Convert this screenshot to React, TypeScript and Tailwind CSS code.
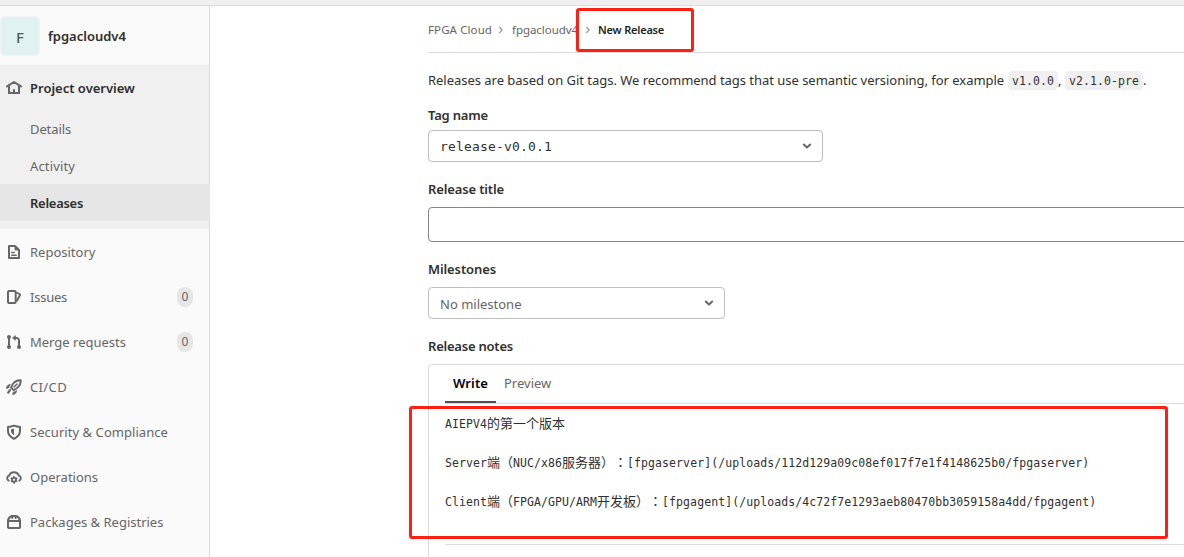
import type { ReactNode } from "react";

const sans = "font-['Noto_Sans','Noto_Sans_CJK_SC',sans-serif]";
const mono = "font-['DejaVu_Sans_Mono','Noto_Sans_CJK_SC',monospace]";

function Icon({ children }: { children: ReactNode }) {
  return (
    <svg
      viewBox="0 0 16 16"
      className="size-4 shrink-0"
      fill="none"
      stroke="#666"
      strokeWidth="2"
      strokeLinejoin="round"
    >
      {children}
    </svg>
  );
}

const HomeIcon = () => (
  <Icon>
    <path d="M1 6.400 8 2l7 4.400" strokeLinecap="round" />
    <path d="M3 6v7h10V6" strokeLinejoin="miter" />
    <path d="M8 9.200V13" />
  </Icon>
);
const DocIcon = () => (
  <Icon>
    <path d="M3 2h6l4 4v8H3z" />
    <path d="M9 2v4h4z" fill="#666" strokeWidth=".8" />
    <path d="M5.200 8.600h3.600M5.200 11.200h5.600" strokeWidth="1.500" />
  </Icon>
);
const IssuesIcon = () => (
  <Icon>
    <path d="M2.800 2h5.900a1 1 0 0 1 1 1v10a1 1 0 0 1-1 1H2.800a1 1 0 0 1-.8-1V3a1 1 0 0 1 .8-1z" />
    <path d="m10.500 3.500 3.100 1.500a.8.800 0 0 1 .4 1l-3.200 6.200" strokeWidth="1.900" />
  </Icon>
);
const MergeIcon = () => (
  <Icon>
    <path d="M3 3v10M13 13V6.500A2.600 2.600 0 0 0 10.400 3.900H9" />
    <path d="M9.800 1v5.800L6 3.900z" fill="#666" stroke="none" />
    <circle cx="3" cy="3" r="2" fill="#666" stroke="none" />
    <circle cx="3" cy="13" r="2" fill="#666" stroke="none" />
    <circle cx="13" cy="13" r="2" fill="#666" stroke="none" />
  </Icon>
);
const RocketIcon = () => (
  <Icon>
    <path d="M14.700 1.300c-3.600-.2-6 1.100-8 4L5 8.700l2.500 2.500 3.200-1.900c2.900-2 4.200-4.400 4-8z" strokeWidth="1.900" />
    <path d="M11 5 8 8" strokeWidth="1.500" strokeLinecap="round" />
    <path d="M4.400 5.200C2 5.500.700 6.800.300 9.400l2.300-.4zM10.800 11.600c-.3 2.400-1.600 3.700-4.200 4.100l.4-2.300z" fill="#666" strokeWidth=".6" />
    <path d="M4 11.200 2.200 13.600" strokeWidth="2.200" strokeLinecap="round" />
  </Icon>
);
const ShieldIcon = () => (
  <Icon>
    <path d="M8 1.600c2 .8 4 1.200 6 1.300v4.100c0 3.500-2.500 6-6 7.900-3.500-1.900-6-4.400-6-7.900V2.900c2-.1 4-.5 6-1.300z" strokeWidth="2" />
    <path d="M8 4.600v6.600C6 9.900 5 8.600 5 6.900V5.200z" fill="#666" stroke="none" />
  </Icon>
);
const CloudGearIcon = () => (
  <Icon>
    <path d="M2.600 11.600A2.700 2.700 0 0 1 3.200 6.600 5 4.600 0 0 1 12.800 6.600a2.700 2.700 0 0 1 .6 5" strokeWidth="1.900" strokeLinecap="round" />
    <circle cx="8" cy="10.800" r="2" strokeWidth="1.800" />
    <path d="M8 7v1.600M8 13v1.700M4.800 9l1.300.800M9.900 11.900l1.300.700M4.800 12.600l1.300-.7M9.900 9.800l1.300-.8" strokeWidth="1.600" />
  </Icon>
);
const PackageIcon = () => (
  <Icon>
    <path d="M2 7h12v6.200a.8.800 0 0 1-.8.800H2.800a.8.800 0 0 1-.8-.8z" />
    <path d="M2 7c.2-2.200 1.700-4.200 3.700-4.900h4.600c2 .7 3.500 2.700 3.700 4.900" strokeWidth="2.100" />
    <path d="M6.300 2v3M9.700 2v3" strokeWidth="1.600" />
  </Icon>
);

function NavItem({ icon, label, tracking = "", count }: { icon: ReactNode; label: string; tracking?: string; count?: number }) {
  return (
    <a className="flex h-[45px] items-center pl-1.5 pr-4">
      {icon}
      <span className={`ml-2 flex-1 ${tracking}`}>{label}</span>
      {count !== undefined && (
        <span className="flex h-5 w-4 items-center justify-center rounded-full bg-[#e6e6e6] text-[12px]">{count}</span>
      )}
    </a>
  );
}

function Sidebar() {
  return (
    <aside className="h-full w-[210px] shrink-0 border-r border-[#dbdbdb] bg-[#fafafa] text-[13px] text-[#666]">
      <div className="flex h-[59px] items-center pl-px pt-px">
        <div className="mb-px flex h-[38px] w-[38px] items-center justify-center rounded-sm bg-[#e0f2f1] pt-0.5 text-[15px] font-medium text-[#555] ring-1 ring-[#f0f4f4]">
          F
        </div>
        <span className="ml-[9px] font-semibold text-[#2e2e2e]">fpgacloudv4</span>
      </div>
      <div className="bg-[#f0f0f0] pb-2">
        <a className="flex h-[45px] items-center pl-1.5 font-semibold text-[#2e2e2e]">
          <HomeIcon />
          <span className="ml-2">Project overview</span>
        </a>
        <a className="flex h-[37px] items-center pl-[30px] tracking-[-0.1px]">Details</a>
        <a className="flex h-[37px] items-center pl-[30px] tracking-[0.14px]">Activity</a>
        <a className="-mr-px flex h-[37px] items-center bg-[#e6e6e6] pl-[30px] font-semibold tracking-[-0.28px] text-[#2e2e2e]">
          Releases
        </a>
      </div>
      <NavItem icon={<DocIcon />} label="Repository" />
      <NavItem icon={<IssuesIcon />} label="Issues" tracking="tracking-[-0.24px]" count={0} />
      <NavItem icon={<MergeIcon />} label="Merge requests" count={0} />
      <NavItem icon={<RocketIcon />} label="CI/CD" tracking="tracking-[0.37px]" />
      <NavItem icon={<ShieldIcon />} label="Security & Compliance" tracking="tracking-[0.05px]" />
      <NavItem icon={<CloudGearIcon />} label="Operations" />
      <NavItem icon={<PackageIcon />} label="Packages & Registries" />
    </aside>
  );
}

const Chevron = () => (
  <svg viewBox="0 0 10 8" className="h-2 w-2.5" fill="none" stroke="#666" strokeWidth="2" strokeLinecap="round" strokeLinejoin="round">
    <path d="M1.800 2.600 5 5.600l3.200-3" />
  </svg>
);
const Separator = () => (
  <svg viewBox="0 0 6 8" className="h-2 w-1.5" fill="none" stroke="#999" strokeWidth="1.200">
    <path d="M1.200 1 4.200 4l-3 3" />
  </svg>
);

function Label({ children, className }: { children: ReactNode; className: string }) {
  return <label className={`flex h-5 items-center text-[13px] font-semibold ${className}`}>{children}</label>;
}

const Cjk = ({ children }: { children: ReactNode }) => (
  <span className="font-['Noto_Sans_CJK_TC',sans-serif] text-[13px] tracking-normal [font-kerning:none] [text-spacing-trim:space-all]">
    {children}
  </span>
);

export default function App() {
  return (
    <div className={`relative flex h-[557px] w-[1184px] flex-col overflow-hidden bg-white text-[13px] leading-5 text-[#303030] ${sans}`}>
      <div className="h-1.5 shrink-0 border-b border-[#dbdbdb] bg-[#f0f0f0]" />
      <div className="flex min-h-0 flex-1">
        <Sidebar />
        <main className="min-w-0 flex-1 pl-[218px]">
          <nav className="flex h-[47px] items-center border-b border-[#dbdbdb] pt-0.5 text-[11.5px] text-[#666]">
            <span className="w-[64px] tracking-[0.1px]">FPGA Cloud</span>
            <span className="ml-1.5 flex w-[14px]"><Separator /></span>
            <span className="w-[66px] tracking-[-0.05px]">fpgacloudv4</span>
            <span className="ml-[7px] flex w-[13px]"><Separator /></span>
            <span className="text-[11px] font-semibold tracking-[-0.2px] text-[#1f1f1f]">New Release</span>
          </nav>

          <p className="mt-[17px] flex h-5 items-center whitespace-pre">
            <span className="w-[580px] tracking-[-0.03px]">
              Releases are based on Git tags. We recommend tags that use semantic versioning, for example
            </span>
            <code className={`flex h-[19px] w-[50px] items-center rounded bg-[#f0f0f0] pl-1 pt-0.5 text-[11.5px] tracking-[0.08px] ${mono}`}>v1.0.0</code>
            <span className="w-[7px]">,</span>
            <code className={`flex h-[19px] w-[78px] items-center rounded bg-[#f0f0f0] pl-1 pt-0.5 text-[11.5px] tracking-[0.08px] ${mono}`}>v2.1.0-pre</code>
            <span>.</span>
          </p>

          <Label className="mt-[15px] tracking-[-0.18px]">Tag name</Label>
          <button className={`mt-[5px] flex h-8 w-[395px] items-center justify-between rounded border border-[#bfbfbf] bg-white pl-[11px] pr-[10px] text-[13px] tracking-[0.17px] ${mono}`}>
            <span className="pt-0.5">release-v0.0.1</span>
            <Chevron />
          </button>

          <Label className="mt-[17px] tracking-[-0.14px]">Release title</Label>
          <input className="mt-2 block h-[35px] w-[800px] rounded border border-[#868686] bg-white" />

          <Label className="mt-[17px] tracking-[-0.11px]">Milestones</Label>
          <button className="mt-2 flex h-8 w-[297px] items-center justify-between rounded border border-[#bfbfbf] bg-white pl-[11px] pr-[10px] text-[#666]">
            <span className="pt-0.5">No milestone</span>
            <Chevron />
          </button>

          <Label className="mt-[17px] tracking-[-0.22px]">Release notes</Label>
          <div className="mt-2 h-[240px] w-[800px] rounded-t border border-[#dbdbdb] pl-4">
            <div className="flex h-[39px] border-b border-[#dbdbdb]">
              <span className="flex h-[38px] w-[51px] items-center justify-center border-b-2 border-[#525252] font-semibold tracking-[0.11px] text-black">
                Write
              </span>
              <span className="ml-2 flex h-[38px] items-center pb-0.5 text-[#666]">Preview</span>
            </div>
            <div className={`h-[141px] whitespace-pre border-b border-[#dbdbdb] text-[11.5px] leading-[38px] tracking-[0.08px] ${mono}`}>
              <div className="h-[39px]">AIEPV4<Cjk>的第一个版本</Cjk></div>
              <div className="h-[39px]">
                Server<Cjk>端（</Cjk>NUC/x86<Cjk>服务器）：</Cjk>[fpgaserver](/uploads/112d129a09c08ef017f7e1f4148625b0/fpgaserver)
              </div>
              <div className="h-[39px]">
                Client<Cjk>端（</Cjk>FPGA/GPU/ARM<Cjk>开发板）：</Cjk>[fpgagent](/uploads/4c72f7e1293aeb80470bb3059158a4dd/fpgagent)
              </div>
            </div>
          </div>
        </main>
      </div>
      <div className="absolute left-[576px] top-2 h-[44px] w-[118px] rounded-[3px] border-3 border-[#ff2015]" />
      <div className="absolute left-[409px] top-[406px] h-[133px] w-[759px] rounded-[3px] border-3 border-[#ff2015]" />
    </div>
  );
}
